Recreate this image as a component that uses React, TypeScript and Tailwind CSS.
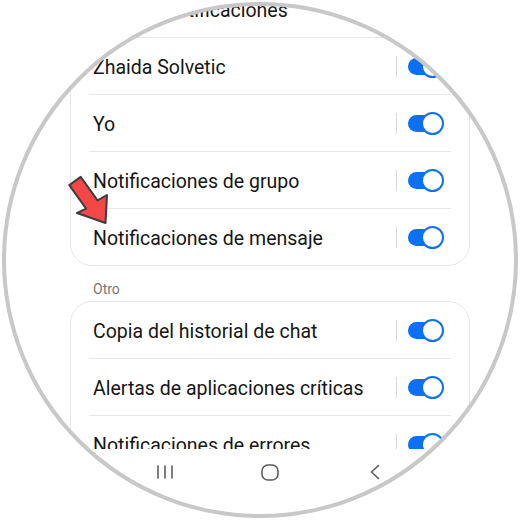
import React from "react";

type Row = { label: string };

const groupOne: Row[] = [
  { label: "Mostrar notificaciones" },
  { label: "Zhaida Solvetic" },
  { label: "Yo" },
  { label: "Notificaciones de grupo" },
  { label: "Notificaciones de mensaje" },
];

const groupTwo: Row[] = [
  { label: "Copia del historial de chat" },
  { label: "Alertas de aplicaciones críticas" },
  { label: "Notificaciones de errores" },
];

function Toggle() {
  return (
    <div className="relative w-[36px] h-[23px] flex items-center">
      <div className="w-[32px] h-[17px] rounded-full bg-[#0b70f2]" />
      <div className="absolute right-0 top-0 w-[23px] h-[23px] rounded-full bg-white border-[2px] border-[#0b70f2]" />
    </div>
  );
}

function SettingRow({ row }: { row: Row }) {
  return (
    <div className="flex items-center h-[56px] pl-[22px] pr-[25px]">
      <span className="flex-1 pt-[3px] text-[19.5px] text-[#161616] whitespace-nowrap">
        {row.label}
      </span>
      <div className="w-px h-[21px] bg-[#d9d9d9] mr-[11px]" />
      <Toggle />
    </div>
  );
}

function Card({ rows }: { rows: Row[] }) {
  return (
    <div className="ml-[70px] mr-[50px] rounded-[22px] border border-[#e6e6e6] bg-white">
      {rows.map((row, i) => (
        <div key={row.label}>
          {i > 0 && <div className="mx-[18px] h-px bg-[#e8e8e8]" />}
          <SettingRow row={row} />
        </div>
      ))}
    </div>
  );
}

function NavBar() {
  return (
    <div className="h-[46px] flex items-center justify-center pl-[19px] bg-white">
      <div className="w-[105px] flex justify-center">
        <svg width="18" height="16" viewBox="0 0 18 16">
          <g stroke="#5c5c5c" strokeWidth="1.6" strokeLinecap="round">
            <line x1="2" y1="2" x2="2" y2="14" />
            <line x1="9" y1="2" x2="9" y2="14" />
            <line x1="16" y1="2" x2="16" y2="14" />
          </g>
        </svg>
      </div>
      <div className="w-[105px] flex justify-center">
        <svg width="20" height="19" viewBox="0 0 20 19">
          <rect x="2" y="2" width="16" height="15" rx="6" fill="none" stroke="#5c5c5c" strokeWidth="1.6" />
        </svg>
      </div>
      <div className="w-[105px] flex justify-center">
        <svg width="14" height="18" viewBox="0 0 14 18">
          <polyline points="10.5,2.5 3.5,9 10.5,15.5" fill="none" stroke="#5c5c5c" strokeWidth="1.6" strokeLinecap="round" strokeLinejoin="round" />
        </svg>
      </div>
    </div>
  );
}

function Screen() {
  return (
    <div className="relative w-[520px] h-[520px] flex flex-col bg-white" style={{ fontFamily: "Roboto, 'Noto Sans', sans-serif" }}>
      <div className="h-[449px] overflow-hidden">
        <div className="mt-[-20px]">
          <Card rows={groupOne} />
          <div className="pl-[93px] pt-[13px] pb-[2px] text-[14px] leading-[20px] text-[#777777]">
            Otro
          </div>
          <Card rows={groupTwo} />
        </div>
      </div>
      <NavBar />

      {/* red pointer arrow */}
      <svg className="absolute left-0 top-0" width="520" height="520" viewBox="0 0 520 520">
        <polygon
          points="80.7,176.9 97.5,200.4 107,195 105.5,223 77,213 86.1,208.6 69.3,185.1"
          fill="#f44848"
          stroke="#3d3d3d"
          strokeWidth="2"
          strokeLinejoin="round"
        />
      </svg>
    </div>
  );
}

export default function App() {
  return (
    <div className="relative w-[520px] h-[520px] bg-white overflow-hidden">
      <div className="absolute left-[5px] top-[5px] w-[510px] h-[510px] rounded-full overflow-hidden">
        <div className="ml-[-5px] mt-[-5px]">
          <Screen />
        </div>
      </div>
      <div className="absolute left-[2px] top-[2px] w-[516px] h-[516px] rounded-full border-[4.5px] border-[#c8c8c8]" />
    </div>
  );
}
